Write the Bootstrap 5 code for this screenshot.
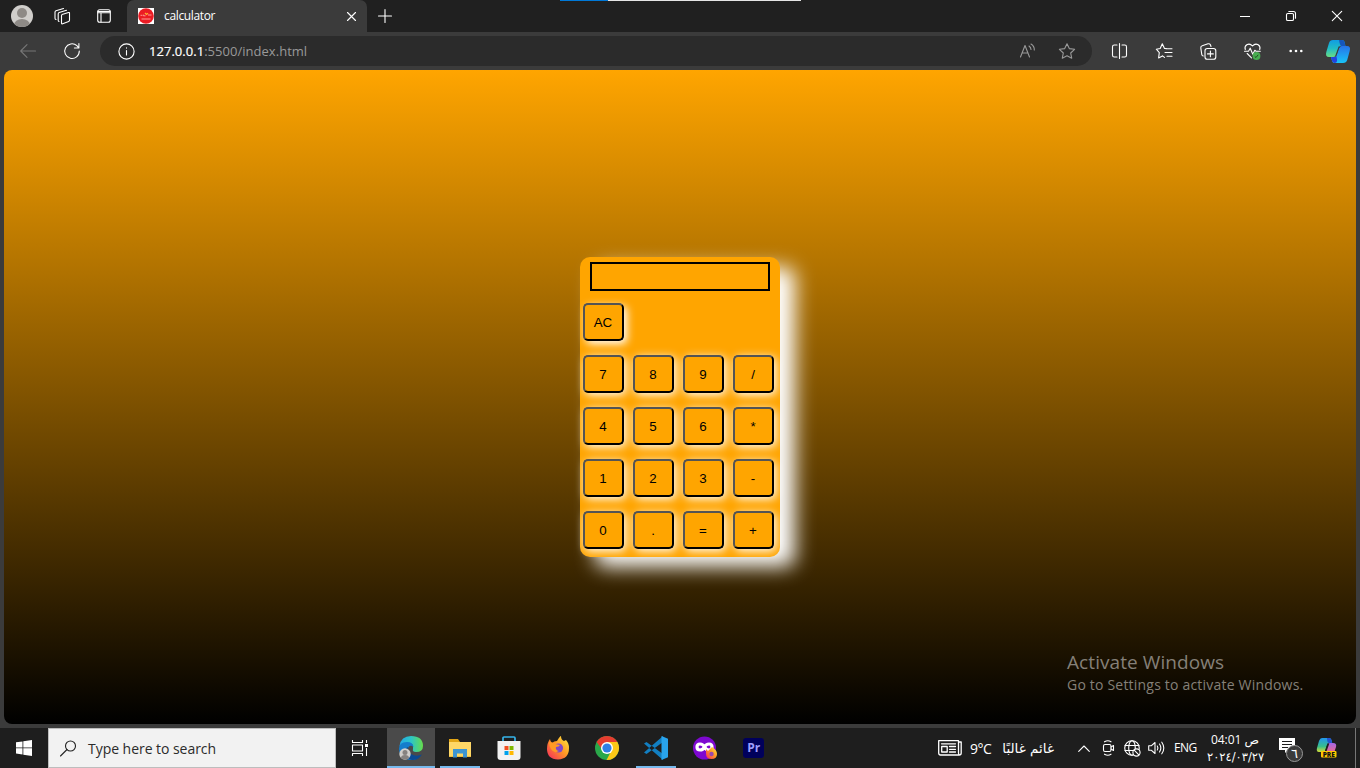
<!DOCTYPE html>
<html lang="en">
<head>
<meta charset="utf-8">
<meta name="viewport" content="width=device-width, initial-scale=1">
<title>calculator</title>
<link href="https://cdn.jsdelivr.net/npm/bootstrap@5.3.0/dist/css/bootstrap.min.css" rel="stylesheet">
<style>
body{width:1360px;height:768px;overflow:hidden;background:#3b3b3b;font-family:"Open Sans","Noto Sans",sans-serif;color:#fff}
svg{display:block;overflow:visible;flex:none}
.ln{fill:none;stroke:#fff;stroke-width:1.1;stroke-linecap:round;stroke-linejoin:round}
.cell{display:flex;align-items:center;justify-content:center;flex:none;height:100%}
.titlebar{height:32px;background:#202020}
.w34{width:34px}.w36{width:36px}.w40{width:40px}.w44{width:44px}.w46{width:46px}.w47{width:47px}.w48{width:48px}.w49{width:49px}
.tab{width:240px;height:32px;background:#3b3b3b;border-radius:7px 7px 0 0;padding:0 11px 0 11px}
.tab-name{font-size:12px;letter-spacing:-.35px;margin-left:10px;line-height:16px}
.loadbar{left:560px;top:0;width:241px;height:1px;background:#e6e6e6}
.loadbar div{width:48px;height:1px;background:#0078d7}
.toolbar{height:38px;padding-left:6px}
.address{width:992px;height:30px;border-radius:15px;background:#2b2b2b;margin:0 6px;padding:0 13px 0 18px}
.url{font-size:13px;letter-spacing:.03px;margin-left:14px;color:#999;line-height:18px}
.url b{font-weight:400;color:#fff;-webkit-text-stroke:.2px #fff}
.viewport{margin:0 4px;height:654px;border-radius:8px;background:linear-gradient(#ffa500,#000);padding-top:20px}
.calc{width:200px;height:300px;border-radius:10px;background:orange;box-shadow:15px 10px 20px #fff;padding:5px 3px 0;font-family:"Liberation Sans",Arial,sans-serif}
.display{width:180px;height:29px;border:2px solid #000;margin:0 7px 12px}
.keys{display:grid;grid-template-columns:repeat(4,41px);grid-auto-rows:38px;gap:14px 9px}
.keys button{width:41px;height:38px;border:2px outset #000;border-radius:5px;background:orange;box-shadow:2px 2px 10px #fff;font-size:13.333px;line-height:15px;padding:0 1px 0 0;color:#000}
.keys button:first-child{grid-column:1/2;box-shadow:3px 3px 8px #fff}
.keys .seven{grid-column:1}
.watermark{left:1067px;top:650px;color:#858078;line-height:24px}
.watermark .big{font-size:19px;letter-spacing:.08px}
.watermark .sub{font-size:14px;line-height:21px;letter-spacing:.2px}
.taskbar{height:40px;margin-top:4px;background:#1e1e1e}
.searchbox{width:288px;height:40px;background:#f2f2f2;border:1px solid #bdbdbd;color:#2b2b2b;font-size:14px;padding-left:11px}
.searchbox span{margin-left:12px;letter-spacing:-.04px}
.task{position:relative}
.task.open::after{content:"";position:absolute;bottom:0;left:5px;width:40px;height:2px;background:#76b9ed}
.task.active{width:48px;margin:0 0 0 3px;background:#4a4a4a}
.task.active::after{left:0;width:48px}
.tray{font-size:12px}
.ar{font-family:"DejaVu Sans",sans-serif}
.clock{width:56px;font-size:12px;line-height:17px;text-align:center}
.weather-c{font-size:14px;letter-spacing:-.5px;width:30px;margin-left:8px}
.weather-t{width:54px;font-size:13.5px;white-space:nowrap;letter-spacing:0}
.showdesk{width:1px;height:40px;background:#777;margin-left:8px}
</style>
</head>
<body>
<header class="titlebar d-flex position-relative">
  <div class="cell w44"><svg width="22" height="22" viewBox="0 0 22 22"><clipPath id="av"><circle cx="11" cy="11" r="11"/></clipPath><g clip-path="url(#av)"><rect width="22" height="22" fill="#d0cecb"/><circle cx="11" cy="8" r="5" fill="#8e8a86"/><ellipse cx="11" cy="20" rx="8" ry="6" fill="#8e8a86"/></g></svg></div>
  <div class="cell w36"><svg width="17" height="17" viewBox="0 0 17 17" class="ln"><path d="M8 6.500l6.500-2q1-.3 1 .8v7q0 .8-.8 1.100l-6 2.400q-1.200.4-1.200-.8V7.800q0-1 .8-1.300zM5 13.500q-.8-.2-.8-1.200V6q0-1 1-1.400l7.300-2.300M2 11.500q-1-.3-1-1.300v-6q0-1 1-1.400L9.500 .5"/></svg></div>
  <div class="cell w47"><svg width="14" height="14" viewBox="0 0 14 14" class="ln"><rect x=".7" y=".7" width="12.600" height="12.600" rx="2"/><path d="M4 4v9M1 2.500h12M1 3.800h12"/></svg></div>
  <div class="tab d-flex align-items-center">
    <svg width="16" height="16" viewBox="0 0 16 16"><rect width="16" height="16" fill="#fff"/><circle cx="8" cy="8" r="7.800" fill="#eb1c24"/><path d="M2.500 7.300h2m1-.6v1.100h2M10 7h3.500M3.500 11h9" stroke="#ff9a92" stroke-width="1" fill="none"/><path d="M7 5l1.500 1.500L10 5.300" stroke="#ffae2e" fill="none" stroke-width="1.300"/></svg>
    <span class="tab-name">calculator</span>
    <svg class="ms-auto ln" width="9" height="9" viewBox="0 0 9 9"><path d="M.5 .5l8 8M8.500 .5l-8 8"/></svg>
  </div>
  <div class="cell w34"><svg class="ln" width="14" height="14" viewBox="0 0 14 14" style="margin-left:1px"><path d="M7 .5v13M.5 7h13"/></svg></div>
  <div class="d-flex ms-auto">
    <div class="cell w46"><svg class="ln" width="10" height="10"><path d="M0 5.500h10" stroke-width="1" stroke-linecap="butt"/></svg></div>
    <div class="cell w46"><svg class="ln" width="10" height="10" viewBox="0 0 10 10"><rect x=".5" y="2.500" width="7" height="7" rx="1.300"/><path d="M2.800 .5h4.700q2 0 2 2v4.700"/></svg></div>
    <div class="cell w46"><svg class="ln" width="10" height="10" viewBox="0 0 10 10"><path d="M.3 .3l9.400 9.400M9.700 .3L.3 9.700"/></svg></div>
  </div>
  <div class="loadbar position-absolute"><div></div></div>
</header>

<nav class="toolbar d-flex align-items-center">
  <div class="cell w44"><svg width="16" height="14" viewBox="0 0 16 14" class="ln" style="stroke:#777"><path d="M15.500 7H.7M7 .7L.7 7 7 13.300"/></svg></div>
  <div class="cell w44"><svg width="16" height="16" viewBox="0 0 16 16" class="ln"><path d="M15.300 8a7.300 7.300 0 1 1-2.400-5.300L14.800 5M14.900 .5V5h-4.500"/></svg></div>
  <div class="address d-flex align-items-center">
    <svg width="17" height="17" viewBox="0 0 17 17" class="ln"><circle cx="8.500" cy="8.500" r="7.600"/><path d="M8.500 7.500V12M8.500 4.800v.3"/></svg>
    <span class="url"><b>127.0.0.1</b>:5500/index.html</span>
    <svg class="ms-auto ln" style="stroke:#999" width="17" height="16" viewBox="0 0 17 16"><path d="M1.500 14L6 2.500 10.500 14M3 10h6M10 3q2 1.500 2 3.500M12 1q3.500 2.200 3.300 6"/></svg>
    <svg class="ln" style="stroke:#999;margin-left:23px;margin-right:3.500px" width="17" height="16" viewBox="0 0 17 16"><path d="M8 .8l2.300 4.800 5.300.7-3.900 3.700 1 5.200-4.700-2.500-4.700 2.500 1-5.200L.4 6.300l5.300-.7z"/></svg>
  </div>
  <div class="cell w44"><svg width="16" height="16" viewBox="0 0 16 16" class="ln"><path d="M5 2H2.300Q.5 2 .5 3.800v8.400q0 1.800 1.800 1.800H5M10 2h2.700q1.800 0 1.800 1.800v8.400q0 1.800-1.800 1.800H10M7.500 .5v15"/></svg></div>
  <div class="cell w44"><svg width="17" height="16" viewBox="0 0 17 16" class="ln"><path d="M10.500 5.500H8.500L6.300 .8 4.200 5.500.3 6.200l3 3.400-.7 5.300 3.800-2M6.500 12.900l2 1.500M10 5.700h6M9 9.500h7M11 13.200h5"/></svg></div>
  <div class="cell w44"><svg width="17" height="17" viewBox="0 0 17 17" class="ln"><rect x="5" y="5.500" width="10.800" height="10.800" rx="2.300"/><path d="M10.400 8v5.800M7.500 10.900h5.800M3.300 13q-1.200-.2-1.500-1.400L.8 5Q.6 3.300 2.200 2.800L8 .8q1.700-.4 2.400 1L11 3.500"/></svg></div>
  <div class="cell w44"><svg width="17" height="17" viewBox="0 0 17 17"><g class="ln"><path d="M1.300 6.500Q.2 3.500 2.800 1.700 6 .1 8.500 3q2.500-2.900 5.700-1.300Q16.800 3.500 15.700 6.500M.5 8.200h4l1.700-3 2.600 6 2-4 1 1h4.500M3.200 10.500l4.300 4.300"/></g><circle cx="12.500" cy="13" r="3.900" fill="#48ad50"/><path d="M10.800 13.500l1.200 1 2.200-2.700" stroke="#205020" fill="none"/></svg></div>
  <div class="cell w44"><svg width="14" height="4" fill="#fff"><circle cx="1.700" cy="2" r="1.300"/><circle cx="7" cy="2" r="1.300"/><circle cx="12.300" cy="2" r="1.300"/></svg></div>
  <div class="cell w40">
    <svg width="24" height="23" viewBox="0 0 24 23"><defs><linearGradient id="c1" x2="0" y2="1"><stop stop-color="#119ce3"/><stop offset=".5" stop-color="#20bcc6"/><stop offset="1" stop-color="#69dd83"/></linearGradient><linearGradient id="c2" x2="0" y2="1"><stop stop-color="#2673e9"/><stop offset="1" stop-color="#19c4f7"/></linearGradient></defs><path d="M7 0h9q2 0 2.600 2l.8 4h-4q-2 0-2.700 2l-2.500 7q-.7 2-2.700 2H3q-4 0-2.700-5L3 3q.8-3 4-3z" fill="url(#c1)"/><path d="M13 0h3q2 0 2.600 2l.8 4h-4Q14 6 13 0z" fill="#1556bd"/><path d="M17 23H8.500Q6.400 23 5.800 20L5 17h3q2 0 2.700-2l2.400-7q.7-2 2.700-2H21q4 0 2.700 5l-2.500 9q-.8 3-4.200 3z" fill="url(#c2)"/><path d="M5 17h3q2 0 2.500-1l.6 4q0 3-2.600 3-2 0-2.700-3z" fill="#2343df"/><path d="M12.600 6.500h2.600q-1.700.3-2.200 2l-2.300 6.500q-.5 1.500-1.700 1.500z" fill="#3b3b3b"/></svg>
  </div>
</nav>

<main class="viewport d-flex align-items-center justify-content-center">
  <section class="calc">
    <div class="display"></div>
    <div class="keys">
      <button>AC</button>
      <button class="seven">7</button><button>8</button><button>9</button><button>/</button>
      <button>4</button><button>5</button><button>6</button><button>*</button>
      <button>1</button><button>2</button><button>3</button><button>-</button>
      <button>0</button><button>.</button><button>=</button><button>+</button>
    </div>
  </section>
</main>
<aside class="watermark position-absolute"><div class="big">Activate Windows</div><div class="sub">Go to Settings to activate Windows.</div></aside>

<footer class="taskbar d-flex align-items-center">
  <div class="cell w48"><svg width="16" height="16" viewBox="0 0 16 16" fill="#fff"><path d="M0 2.300L6.500 1.400V7.500H0zM7.300 1.300L16 0v7.500H7.300zM0 8.300h6.500v6.200L0 13.600zM7.300 8.300H16V16l-8.700-1.300z"/></svg></div>
  <div class="searchbox d-flex align-items-center"><svg width="16" height="17" viewBox="0 0 16 17" class="ln" style="stroke:#222"><circle cx="10.500" cy="6" r="5"/><path d="M7 9.500L.5 16"/></svg><span>Type here to search</span></div>
  <div class="cell w48"><svg width="16" height="16" viewBox="0 0 16 16" class="ln" style="stroke-linecap:butt"><path d="M.5 0v2.500h10V0M.5 16v-2.500h10V16M14.500 0v3M14.500 8v8"/><rect x=".5" y="5" width="10" height="6"/><path d="M13 4h3v3h-3z" fill="#fff" stroke="none"/></svg></div>
  <div class="cell w48 task open active"><svg width="26" height="26" viewBox="0 0 26 26"><defs><linearGradient id="e1"><stop stop-color="#22a9e8"/><stop offset=".5" stop-color="#2dc6c5"/><stop offset="1" stop-color="#67dc4b"/></linearGradient></defs><path d="M1.500 11Q3 1 13 1q12 0 12 10 0 6-7 6-4 0-3-3 1-7-6-6-5 0-7.500 3z" fill="url(#e1)"/><path d="M1 14q0-7 8-7 6 0 6.500 5Q12 9 10 13q-2 7 8 12Q2 26 1 14z" fill="#147dcc"/><path d="M10 12q-1 4 3 7 5 3 11 .500-4 6-10 5.500-6-1-7-7 0-5 3-6z" fill="#0b4a93"/><circle cx="7" cy="19" r="5.700" fill="#d0cecb"/><circle cx="7" cy="17.500" r="2.500" fill="#858280"/><path d="M3 23q0-3 4-3t4 3q-4 3-8 0z" fill="#858280"/></svg></div>
  <div class="cell w49 task open"><svg width="22" height="19" viewBox="0 0 22 19"><path d="M0 0h9l2 3h10q1 0 1 1v14H0z" fill="#e2a515"/><path d="M0 3h22v14.500H0z" fill="#ffd766"/><path d="M4 10h14v8.500h-4v-4H8v4H4z" fill="#3d95d2"/></svg></div>
  <div class="cell w49 task"><svg width="24" height="24" viewBox="0 0 24 24"><path d="M6 6V2q0-1 1-1h10q1 0 1 1v4" fill="none" stroke="#36b5eb" stroke-width="1.700"/><path d="M.5 5h23v16q0 3-3 3h-17q-3 0-3-3z" fill="#f2f2f2"/><path d="M7.500 10h4v4h-4z" fill="#f15022"/><path d="M12.500 10h4v4h-4z" fill="#7eb900"/><path d="M7.500 15h4v4h-4z" fill="#00a2ed"/><path d="M12.500 15h4v4h-4z" fill="#ffb900"/></svg></div>
  <div class="cell w49 task"><svg width="24" height="24" viewBox="0 0 24 24"><defs><linearGradient id="f1" x1="1" x2="0" y2="1"><stop stop-color="#fff044"/><stop offset=".45" stop-color="#ff9b24"/><stop offset="1" stop-color="#f62460"/></linearGradient></defs><path d="M4 3q0 2 2 4 2-2 5-2 3-5 4-5 0 4 3 5l2-1q3 3 3 8 0 11-11 11.500Q1 23 1 13q0-6 3-10z" fill="url(#f1)"/><circle cx="12.500" cy="12" r="4.600" fill="#8148c8"/><path d="M3 6q4 0 6 2l5 1q-1 2-4 2-1 3 3 4-5 3-8-2-2-3-2-7z" fill="#ff9a25"/></svg></div>
  <div class="cell w49 task"><svg width="24" height="24" viewBox="0 0 24 24"><circle cx="12" cy="12" r="12" fill="#2aa84a"/><path d="M1.600 6A12 12 0 0 1 22.400 6L12 7l-4.500 7z" fill="#e53c2f"/><path d="M22.400 6A12 12 0 0 1 11.500 24l5-9.500L12 6z" fill="#fcc817"/><circle cx="12" cy="12" r="6" fill="#fff"/><circle cx="12" cy="12" r="4.600" fill="#2f7fe6"/></svg></div>
  <div class="cell w49 task open"><svg width="24" height="24" viewBox="0 0 24 24"><path d="M0 7.500L2.500 6 19 18v6zM0 16.500L2.500 18 19 6V0z" fill="#127fc2"/><path d="M17.500 0L24 2.800v18.400L17.500 24z" fill="#29a4ed"/></svg></div>
  <div class="cell w49 task"><svg width="24" height="24" viewBox="0 0 24 24"><circle cx="11.500" cy="12" r="11.500" fill="#7d08d0"/><path d="M11.500 11c-2-4-7.500-4-7.500 0s5.500 4 7.500 0c2-4 7.500-4 7.500 0s-5.500 4-7.500 0z" fill="none" stroke="#fff" stroke-width="3.200"/><path d="M13 13l2 2 4-4q5 3 5 7 0 5-5.500 5T13 18z" fill="url(#f1)"/><circle cx="18.500" cy="18" r="2.200" fill="#9949ad"/></svg></div>
  <div class="cell w49 task"><svg width="21" height="20" viewBox="0 0 21 20"><rect width="21" height="20" rx="3" fill="#00005b"/><text x="10.700" y="14" text-anchor="middle" font-size="12" font-weight="700" fill="#9f9fff">Pr</text></svg></div>

  <div class="tray d-flex align-items-center ms-auto h-100">
    <svg width="24" height="16" viewBox="0 0 24 16" class="ln" style="stroke-width:1.300"><path d="M20.500 2h2.700v11q0 2-2 2H2.500q-1.800 0-1.800-2V.7h19.800V13q0 2 1.300 2"/><rect x="3.700" y="6.500" width="5.500" height="5.500"/><path d="M3.500 3.800h14M11.500 6.500h6M11.500 9.300h6M11.500 12h6"/></svg>
    <span class="weather-c">9°C</span><span class="weather-t ar" dir="rtl">غائم غالبًا</span>
    <div class="cell" style="width:24px;margin-left:18px"><svg width="12" height="7" viewBox="0 0 12 7" class="ln"><path d="M.7 6.300L6 1l5.300 5.300"/></svg></div>
    <div class="cell" style="width:24px"><svg width="12" height="16" viewBox="0 0 12 16" class="ln"><rect x="1.500" y="4.500" width="7.500" height="7" rx="1.500"/><path d="M9 7l2.500-1.500v5L9 9M2.500 1.800q3.500-2 6.500 0M2.500 14.200q3.500 2 6.500 0"/></svg></div>
    <div class="cell" style="width:24px"><svg width="16" height="16" viewBox="0 0 16 16" class="ln"><circle cx="8" cy="8" r="7.300"/><ellipse cx="8" cy="8" rx="3.300" ry="7.300"/><path d="M1 5.500h14M1 10.500h14"/><circle cx="12.500" cy="12.500" r="3.600" fill="#1e1e1e"/><path d="M10.200 10.200l4.600 4.600"/></svg></div>
    <div class="cell" style="width:24px"><svg width="17" height="14" viewBox="0 0 17 14" class="ln"><path d="M.7 4.800h2.500L7 1.500v11L3.200 9.200H.7zM9.300 5q1.300 2 0 4M11.500 3q2.700 4 0 8M13.800 1.200q4 5.800 0 11.600"/></svg></div>
    <span style="width:33px;padding-left:6px;letter-spacing:-.55px">ENG</span>
    <div class="clock me-3" style="margin-left:6px"><div style="letter-spacing:-.45px;white-space:nowrap">04:01 <span class="ar">ص</span></div><div class="ar" style="font-size:11.500px;letter-spacing:-.45px;white-space:nowrap"><bdo dir="ltr">٢٠٢٤/٠٣/٢٧</bdo></div></div>
    <svg width="25" height="24" viewBox="0 0 25 24"><path d="M0 2h16v12H9l-3 3v-3H0z" fill="#fff"/><path d="M3 5.500h10M3 8.500h10M3 11.500h6" stroke="#1e1e1e"/><circle cx="15.500" cy="17.500" r="8" fill="#3a3a3a" stroke="#999"/><text x="15.500" y="22" text-anchor="middle" font-family="DejaVu Sans" font-size="13" fill="#fff">٦</text></svg>
    <svg style="margin-left:12px" width="21" height="20" viewBox="0 0 21 20"><defs><linearGradient id="p1" x2="0" y2="1"><stop stop-color="#2196ee"/><stop offset=".6" stop-color="#37be8d"/><stop offset="1" stop-color="#d4dd35"/></linearGradient><linearGradient id="p2" x2="0" y2="1"><stop stop-color="#a366e9"/><stop offset="1" stop-color="#f66b83"/></linearGradient></defs><path d="M6 0h7q2 0 2.500 2l.7 3H13q-1.500 0-2 2l-2 6q-.5 1-2 1H3q-3 0-2-4l2-7q1-3 3-3z" fill="url(#p1)"/><path d="M13.500 5H17q4 0 3 4l-2 6H9.500l2-8q.5-2 2-2z" fill="url(#p2)"/><path d="M11 0h2q2 0 2.500 2l.7 3H13q-2 0-2-5z" fill="#2453d0"/><path d="M11.500 5.500h1.800L10.300 14H8.600z" fill="#1e1e1e"/><rect x="5" y="13" width="15.500" height="6.500" rx="1" fill="#ffc800"/><text x="12.800" y="18.600" text-anchor="middle" font-size="6.500" font-weight="800" fill="#111">PRE</text></svg>
    <div class="showdesk" style="margin-left:18px;margin-right:4px"></div>
  </div>
</footer>
<script src="https://cdn.jsdelivr.net/npm/bootstrap@5.3.0/dist/js/bootstrap.bundle.min.js"></script>
</body>
</html>
